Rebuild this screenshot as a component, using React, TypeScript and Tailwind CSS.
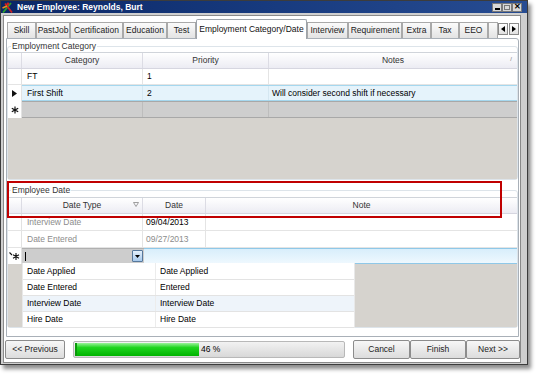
import React from 'react';

const HeaderCell: React.FC<{ w: string; children?: React.ReactNode }> = ({ w, children }) => (
  <div className={`${w} h-full flex items-center justify-center border-r border-[#dcdce4] text-[#333]`}>{children}</div>
);

const Tab: React.FC<{ w: string; label?: string; active?: boolean }> = ({ w, label, active }) =>
  active ? (
    <div className={`${w} h-[20px] -mb-px relative z-10 flex items-center justify-center bg-white border border-b-0 border-[#9da3aa] rounded-t-[2px] text-[#111]`}>
      {label}
    </div>
  ) : (
    <div className={`${w} h-[16px] flex items-center justify-center bg-gradient-to-b from-[#fbfbfb] to-[#e3e3e3] border border-b-0 border-[#a9a9a9] text-[#222]`}>
      {label}
    </div>
  );

const RowMarker: React.FC<{ kind?: 'arrow' | 'star' | 'edit' }> = ({ kind }) => (
  <div className="w-[14px] h-full flex items-center justify-center bg-white border-r border-[#e2e2e2]">
    {kind === 'arrow' && (
      <svg width="5" height="7" viewBox="0 0 5 7">
        <path d="M0 0 L5 3.5 L0 7 Z" fill="#111" />
      </svg>
    )}
    {kind === 'star' && (
      <svg width="8" height="8" viewBox="0 0 8 8" stroke="#111" strokeWidth="1.2">
        <path d="M4 0.5 V7.5 M0.8 2.2 L7.2 5.8 M0.8 5.8 L7.2 2.2" />
      </svg>
    )}
    {kind === 'edit' && (
      <svg width="11" height="9" viewBox="0 0 11 9" stroke="#111" strokeWidth="1.1">
        <path d="M0.5 0.5 L3 3" />
        <path d="M7 1 V8 M4 2.8 L10 6.2 M4 6.2 L10 2.8" />
      </svg>
    )}
  </div>
);

export default function App() {
  return (
    <div className="relative w-[540px] h-[377px] bg-white font-['Liberation_Sans',Arial,sans-serif] text-[8.5px] leading-none text-black">
      {/* Window */}
      <div className="w-[528px] h-[365px] flex flex-col bg-[#cfcfcf] border border-[#3c3c3c] shadow-[3px_4px_4px_rgba(0,0,0,0.45)]">
        {/* Title bar */}
        <div className="h-[12px] flex items-center bg-gradient-to-r from-[#0b2766] via-[#173a7e] to-[#274c92] pl-[1px] pr-[5px]">
          <svg width="12" height="11" viewBox="0 0 12 11">
            <path d="M1 10.5 L9 1" stroke="#2aa02a" strokeWidth="1.8" />
            <path d="M3 1.5 L10 10.5" stroke="#d02020" strokeWidth="1.8" />
            <path d="M0.5 6 L5 4" stroke="#f08a1a" strokeWidth="1.4" />
            <circle cx="6" cy="2" r="1.4" fill="#d02020" />
          </svg>
          <span className="ml-[3px] font-bold text-white text-[8.5px]">New Employee: Reynolds, Burt</span>
          <div className="ml-auto flex">
            <div className="w-[10px] h-[9px] bg-[#d8d8d8] border border-[#7a7a7a] flex items-end justify-center pb-[1px]">
              <div className="w-[5px] h-[2px] bg-black" />
            </div>
            <div className="w-[10px] h-[9px] bg-[#d8d8d8] border border-[#7a7a7a] flex items-center justify-center">
              <div className="w-[6px] h-[5px] border border-[#777]" />
            </div>
            <div className="w-[10px] h-[9px] bg-[#d8d8d8] border border-[#7a7a7a] flex items-center justify-center font-bold text-[8px]">
              ✕
            </div>
          </div>
        </div>

        {/* Body */}
        <div className="flex-1 flex flex-col ml-[2px] mr-[6px] mt-[2px] mb-[1px] bg-white border border-[#8a8a8a]">
          {/* Tab strip */}
          <div className="h-[22px] pt-[3px] pl-[3px] flex items-end">
            <Tab w="w-[29px]" label="Skill" />
            <Tab w="w-[34px]" label="PastJob" />
            <Tab w="w-[53px]" label="Certification" />
            <Tab w="w-[44px]" label="Education" />
            <Tab w="w-[29px]" label="Test" />
            <Tab w="w-[111px]" label="Employment Category/Date" active />
            <Tab w="w-[41px]" label="Interview" />
            <Tab w="w-[54px]" label="Requirement" />
            <Tab w="w-[29px]" label="Extra" />
            <Tab w="w-[28px]" label="Tax" />
            <Tab w="w-[29px]" label="EEO" />
            <Tab w="w-[10px]" />
            <div className="h-[16px] flex items-center gap-px pb-[2px]">
              <div className="w-[10px] h-[12px] flex items-center justify-center bg-gradient-to-b from-white to-[#e0e0e0] border border-[#8a8a8a]">
                <svg width="4" height="6" viewBox="0 0 4 6"><path d="M4 0 L0 3 L4 6 Z" fill="#000" /></svg>
              </div>
              <div className="w-[10px] h-[12px] flex items-center justify-center bg-gradient-to-b from-white to-[#e0e0e0] border border-[#8a8a8a]">
                <svg width="4" height="6" viewBox="0 0 4 6"><path d="M0 0 L4 3 L0 6 Z" fill="#000" /></svg>
              </div>
            </div>
          </div>

          {/* Tab panel */}
          <div className="h-[299px] ml-[2px] mr-[1px] flex flex-col bg-white border border-[#a9b0b8] rounded-tr-[3px]">
            {/* Employment Category */}
            <fieldset className="mt-[2px] border border-[#dde4ea] rounded-[3px]">
              <legend className="ml-[3px] px-[1px] leading-[10px] text-[#333]">Employment Category</legend>
              <div className="mt-[1px] h-[127px] flex flex-col bg-[#d6d3ce] border-t border-[#d0d4da]">
                <div className="h-[16px] flex bg-gradient-to-b from-white to-[#ececf3] border-b border-[#d6d6e0]">
                  <div className="w-[14px] border-r border-[#dcdce4]" />
                  <HeaderCell w="w-[121px]">Category</HeaderCell>
                  <HeaderCell w="w-[126px]">Priority</HeaderCell>
                  <div className="flex-1 relative flex items-center justify-center text-[#333]">
                    Notes
                    <span className="absolute right-[5px] top-[3px] text-[6px] text-[#777]">/</span>
                  </div>
                </div>
                <div className="h-[16px] flex bg-white border-b border-[#e4e4e4]">
                  <RowMarker />
                  <div className="w-[121px] flex items-center pl-[5px] border-r border-[#e4e4e4]">FT</div>
                  <div className="w-[126px] flex items-center pl-[4px] border-r border-[#e4e4e4]">1</div>
                  <div className="flex-1" />
                </div>
                <div className="h-[16px] flex bg-white">
                  <RowMarker kind="arrow" />
                  <div className="flex-1 flex bg-[#e5f3fb] border-y border-[#a5d7ee]">
                    <div className="w-[121px] flex items-center pl-[5px] border-r border-[#d5e7f1]">First Shift</div>
                    <div className="w-[126px] flex items-center pl-[4px] border-r border-[#d5e7f1]">2</div>
                    <div className="flex-1 flex items-center pl-[3px]">Will consider second shift if necessary</div>
                  </div>
                </div>
                <div className="h-[17px] flex">
                  <RowMarker kind="star" />
                  <div className="flex-1 flex bg-[#cecece] border-y border-[#a8a8a8]">
                    <div className="w-[121px] border-r border-[#bdbdbd]" />
                    <div className="w-[126px] border-r border-[#bdbdbd]" />
                    <div className="flex-1" />
                  </div>
                </div>
                <div className="flex-1" />
              </div>
            </fieldset>

            {/* Employee Date */}
            <fieldset className="mt-[5px] border border-[#dde4ea] rounded-[3px]">
              <legend className="ml-[3px] px-[1px] leading-[10px] text-[#333]">Employee Date</legend>
              <div className="relative mt-[2px] h-[130px] flex flex-col bg-[#d6d3ce] border-t border-[#d0d4da]">
                <div className="h-[16px] flex bg-gradient-to-b from-white to-[#ececf3] border-b border-[#d6d6e0]">
                  <div className="w-[14px] border-r border-[#dcdce4]" />
                  <div className="w-[121px] h-full relative flex items-center justify-center border-r border-[#dcdce4] text-[#333]">
                    Date Type
                    <svg className="absolute right-[3px] top-[4px]" width="6" height="5" viewBox="0 0 6 5">
                      <path d="M0.5 0.5 H5.5 L3 4.5 Z" fill="none" stroke="#888" strokeWidth="0.8" />
                    </svg>
                  </div>
                  <HeaderCell w="w-[63px]">Date</HeaderCell>
                  <div className="flex-1 flex items-center justify-center text-[#333]">Note</div>
                </div>
                <div className="h-[17px] flex bg-white border-b border-[#e4e4e4]">
                  <RowMarker />
                  <div className="w-[121px] flex items-center pl-[5px] border-r border-[#e4e4e4] text-[#8c8c8c]">Interview Date</div>
                  <div className="w-[63px] flex items-center pl-[3px] border-r border-[#e4e4e4]">09/04/2013</div>
                  <div className="flex-1" />
                </div>
                <div className="h-[17px] flex bg-white border-b border-[#e4e4e4]">
                  <RowMarker />
                  <div className="w-[121px] flex items-center pl-[5px] border-r border-[#e4e4e4] text-[#8c8c8c]">Date Entered</div>
                  <div className="w-[63px] flex items-center pl-[3px] border-r border-[#e4e4e4] text-[#8c8c8c]">09/27/2013</div>
                  <div className="flex-1" />
                </div>
                <div className="h-[16px] flex">
                  <RowMarker kind="edit" />
                  <div className="w-[122px] flex items-center bg-[#cdcdcd] border-y border-[#b0b0b0] pl-[3px] pr-[1px]">
                    <div className="w-px h-[9px] bg-black" />
                    <div className="ml-auto w-[11px] h-[12px] flex items-center justify-center rounded-[1px] bg-gradient-to-b from-[#e4f0fb] to-[#a7c9ec] border border-[#56789c]">
                      <svg width="5" height="3" viewBox="0 0 5 3"><path d="M0 0 H5 L2.5 3 Z" fill="#000" /></svg>
                    </div>
                  </div>
                  <div className="flex-1 bg-gradient-to-b from-[#d8eefb] to-[#eef8fe] border-y border-[#8fc8e8]" />
                </div>
                <div className="flex-1" />

                {/* Dropdown list */}
                <div className="absolute left-[14px] top-[65px] w-[333px] flex flex-col bg-white border-x border-[#e8e8e8]">
                  <div className="h-[17px] flex border-b border-[#e3e3e3]">
                    <div className="w-[133px] flex items-center pl-[4px] border-r border-[#ececec]">Date Applied</div>
                    <div className="flex-1 flex items-center pl-[4px]">Date Applied</div>
                  </div>
                  <div className="h-[16px] flex border-b border-[#e3e3e3]">
                    <div className="w-[133px] flex items-center pl-[4px] border-r border-[#ececec]">Date Entered</div>
                    <div className="flex-1 flex items-center pl-[4px]">Entered</div>
                  </div>
                  <div className="h-[16px] flex bg-[#eef4fa] border-b border-[#e3e3e3]">
                    <div className="w-[133px] flex items-center pl-[4px] border-r border-[#ececec]">Interview Date</div>
                    <div className="flex-1 flex items-center pl-[4px]">Interview Date</div>
                  </div>
                  <div className="h-[16px] flex border-b border-[#e3e3e3]">
                    <div className="w-[133px] flex items-center pl-[4px] border-r border-[#ececec]">Hire Date</div>
                    <div className="flex-1 flex items-center pl-[4px]">Hire Date</div>
                  </div>
                </div>
              </div>
            </fieldset>
          </div>

          {/* Footer */}
          <div className="flex-1 flex items-center pl-px">
            <button className="w-[60px] h-[19px] rounded-[2px] border border-[#8c8c8c] bg-gradient-to-b from-[#f7f7f7] to-[#dcdcdc] text-[#222]">
              &lt;&lt; Previous
            </button>
            <div className="ml-[8px] w-[272px] h-[17px] flex items-center p-[1px] rounded-[2px] border border-[#b8b8b8] bg-gradient-to-b from-[#f2f2f2] to-[#d8d8d8]">
              <div className="w-[124px] h-full bg-[linear-gradient(to_bottom,#9af39a,#1fd51f_35%,#00b300)] border-l-2 border-[#0a9a0a]" />
              <span className="ml-[2px]">46 %</span>
            </div>
            <button className="ml-[8px] w-[57px] h-[19px] rounded-[2px] border border-[#8c8c8c] bg-gradient-to-b from-[#f7f7f7] to-[#dcdcdc] text-[#222]">
              Cancel
            </button>
            <button className="w-[56px] h-[19px] rounded-[2px] border border-[#8c8c8c] bg-gradient-to-b from-[#f7f7f7] to-[#dcdcdc] text-[#222]">
              Finish
            </button>
            <button className="w-[54px] h-[19px] rounded-[2px] border border-[#8c8c8c] bg-gradient-to-b from-[#f7f7f7] to-[#dcdcdc] text-[#222]">
              Next &gt;&gt;
            </button>
          </div>
        </div>
      </div>

      {/* Highlight annotation */}
      <div className="absolute left-[7px] top-[181px] w-[495px] h-[37px] border-2 border-[#c00000]" />
    </div>
  );
}
